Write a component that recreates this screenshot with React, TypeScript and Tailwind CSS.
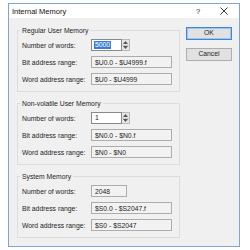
import React from "react";

type Row = { label: string; value: string };

function Spinner() {
  return (
    <div className="flex flex-col w-[8px] h-full border border-l-0 border-[#b9b9b9] bg-[#e6e6e6]">
      <div className="flex-1 flex items-center justify-center border-b border-[#c8c8c8]">
        <svg width="5" height="3" viewBox="0 0 5 3">
          <path d="M0 3 L2.5 0 L5 3 Z" fill="#555" />
        </svg>
      </div>
      <div className="flex-1 flex items-center justify-center">
        <svg width="5" height="3" viewBox="0 0 5 3">
          <path d="M0 0 L2.5 3 L5 0 Z" fill="#555" />
        </svg>
      </div>
    </div>
  );
}

function WordsInput({ value, selected }: { value: string; selected?: boolean }) {
  return (
    <div className="flex h-[12px]">
      <div className="w-[31px] h-full border border-[#8a8a8a] bg-white flex items-center pl-[2px]">
        <span
          className={
            selected
              ? "bg-[#3a7fd6] text-white leading-[8px] px-[1px]"
              : "leading-[8px] px-[1px]"
          }
        >
          {value}
        </span>
      </div>
      <Spinner />
    </div>
  );
}

function ReadField({ value, w = "w-[81px]" }: { value: string; w?: string }) {
  return (
    <div
      className={`${w} h-[12px] border border-[#acacac] bg-[#f2f2f2] flex items-center pl-[3px] whitespace-nowrap`}
    >
      {value}
    </div>
  );
}

function LabelCell({ text }: { text: string }) {
  return <div className="w-[69px] ml-[2px] whitespace-nowrap text-[#1e1e1e]">{text}</div>;
}

function Group({
  title,
  words,
  rows,
}: {
  title: string;
  words: React.ReactNode;
  rows: Row[];
}) {
  return (
    <fieldset className="border border-[#dcdcdc] px-[2px] pb-[6px]">
      <legend className="px-[2px] leading-[9px] whitespace-nowrap text-[#1e1e1e]">{title}</legend>
      <div className="flex flex-col gap-[5px] mt-[4px]">
        <div className="flex items-center">
          <LabelCell text="Number of words:" />
          {words}
        </div>
        {rows.map((r) => (
          <div key={r.label} className="flex items-center">
            <LabelCell text={r.label} />
            <ReadField value={r.value} />
          </div>
        ))}
      </div>
    </fieldset>
  );
}

export default function App() {
  return (
    <div
      className="w-[250px] h-[250px] bg-white pt-[3px] pl-[8px] text-[6.8px] leading-[9px] text-[#1e1e1e]"
      style={{ fontFamily: "'Liberation Sans', Arial, sans-serif" }}
    >
      <div className="w-[232px] h-[244px] border border-[#7ea6d2] bg-[#f0f0f0] flex flex-col overflow-hidden">
        {/* Title bar */}
        <div className="h-[14px] shrink-0 bg-white flex items-center pl-[3px]">
          <span className="text-[7.5px] text-[#111] flex-1">Internal Memory</span>
          <span className="text-[7.5px] w-[10px] text-center mr-[17px]">?</span>
          <svg width="8" height="8" viewBox="0 0 8 8" className="mr-[11px]">
            <path d="M0.5 0.5 L7.5 7.5 M7.5 0.5 L0.5 7.5" stroke="#222" strokeWidth="0.9" />
          </svg>
        </div>

        {/* Body */}
        <div className="flex pl-[8px] pt-[8px]">
          <div className="w-[163px] flex flex-col gap-[7px]">
            <Group
              title="Regular User Memory"
              words={<WordsInput value="5000" selected />}
              rows={[
                { label: "Bit address range:", value: "$U0.0 - $U4999.f" },
                { label: "Word address range:", value: "$U0 - $U4999" },
              ]}
            />
            <Group
              title="Non-volatile User Memory"
              words={<WordsInput value="1" />}
              rows={[
                { label: "Bit address range:", value: "$N0.0 - $N0.f" },
                { label: "Word address range:", value: "$N0 - $N0" },
              ]}
            />
            <Group
              title="System Memory"
              words={<ReadField value="2048" w="w-[36px]" />}
              rows={[
                { label: "Bit address range:", value: "$S0.0 - $S2047.f" },
                { label: "Word address range:", value: "$S0 - $S2047" },
              ]}
            />
          </div>

          <div className="ml-[6px] pt-[1px] flex flex-col gap-[8px] w-[46px]">
            <button className="h-[13px] border border-[#3c87d6] bg-[#e1e1e1] text-[6.8px] leading-none shadow-[inset_0_0_0_1px_#9cc4ec]">
              OK
            </button>
            <button className="h-[13px] border border-[#adadad] bg-[#e1e1e1] text-[6.8px] leading-none">
              Cancel
            </button>
          </div>
        </div>
      </div>
    </div>
  );
}
